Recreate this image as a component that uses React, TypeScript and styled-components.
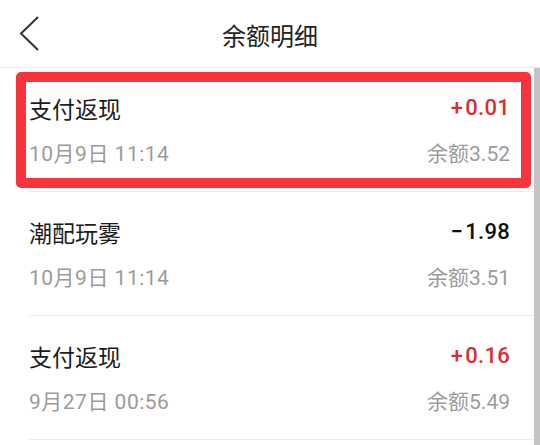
import * as React from 'react';
import styled, { createGlobalStyle } from 'styled-components';

const GlobalStyle = createGlobalStyle`
  html, body {
    margin: 0;
    padding: 0;
    background: #fff;
  }
  body {
    font-family: Roboto, "Noto Sans CJK SC", sans-serif;
  }
`;

const Page = styled.div`
  width: 540px;
  height: 445px;
  overflow: hidden;
  background: #fff;
`;

const Header = styled.div`
  height: 67px;
  border-bottom: 1px solid #e6e6e6;
  display: grid;
  grid-template-columns: 80px 1fr 80px;
  align-items: center;
`;

const BackButton = styled.div`
  display: flex;
  align-items: center;
  padding-left: 19px;
  height: 100%;
  color: #333;
`;

const Title = styled.h1`
  margin: 0;
  text-align: center;
  font-size: 24px;
  font-weight: 400;
  color: #222;
  line-height: 67px;
  padding-top: 1px;
  font-family: "Noto Sans CJK SC", sans-serif;
`;

const List = styled.div`
  position: relative;
  height: 377px;
`;

const Scroll = styled.div`
  position: absolute;
  top: 0;
  right: 0;
  bottom: 0;
  width: 6px;
  background: #c4c4c4;
`;

const Row = styled.div`
  position: relative;
  height: 123px;
  margin-left: 29px;
  padding-right: 30px;
  border-bottom: 1px solid #ececec;
  box-sizing: content-box;
`;

const Line = styled.div<{ $top: number }>`
  display: flex;
  justify-content: space-between;
  align-items: center;
  padding-top: ${p => p.$top}px;
`;

const Name = styled.span`
  font-family: "Noto Sans CJK SC", sans-serif;
  font-size: 23px;
  line-height: 32px;
  color: #1c1c1c;
`;

const Amount = styled.span<{ $income: boolean }>`
  font-family: Roboto, sans-serif;
  font-size: 22px;
  font-weight: 500;
  line-height: 32px;
  color: ${p => (p.$income ? '#d8302e' : '#111')};
  letter-spacing: 0.3px;
`;

const Sign = styled.span`
  margin-right: 2px;
`;

const Meta = styled.span<{ $wide?: boolean }>`
  font-family: Roboto, "Noto Sans CJK SC", sans-serif;
  font-size: 21px;
  line-height: 28px;
  color: #9b9b9b;
  letter-spacing: ${p => (p.$wide ? '0.5px' : '0')};
`;

const Highlight = styled.div`
  position: absolute;
  top: 4px;
  left: -13px;
  right: 9px;
  bottom: 3px;
  border: 10.5px solid #f7333b;
  border-radius: 5px;
  pointer-events: none;
`;

const records = [
  { name: '支付返现', amount: '0.01', income: true, time: '10月9日 11:14', balance: '3.52' },
  { name: '潮配玩雾', amount: '1.98', income: false, time: '10月9日 11:14', balance: '3.51' },
  { name: '支付返现', amount: '0.16', income: true, time: '9月27日 00:56', balance: '5.49' },
];

const App = () => {
  return (
    <Page>
      <GlobalStyle />
      <Header>
        <BackButton>
          <svg width="20" height="36" viewBox="0 0 20 36" fill="none">
            <polyline points="19,1 2,17.5 19,34" stroke="#333" strokeWidth="2" strokeLinejoin="miter" />
          </svg>
        </BackButton>
        <Title>余额明细</Title>
        <div />
      </Header>
      <List>
        {records.map((r, i) => (
          <Row key={i}>
            <Line $top={24}>
              <Name>{r.name}</Name>
              <Amount $income={r.income}>
                <Sign>{r.income ? '+' : '−'}</Sign>
                {r.amount}
              </Amount>
            </Line>
            <Line $top={16}>
              <Meta $wide>{r.time}</Meta>
              <Meta>余额{r.balance}</Meta>
            </Line>
            {i === 0 && <Highlight />}
          </Row>
        ))}
        <Scroll />
      </List>
    </Page>
  );
};

export default App;
